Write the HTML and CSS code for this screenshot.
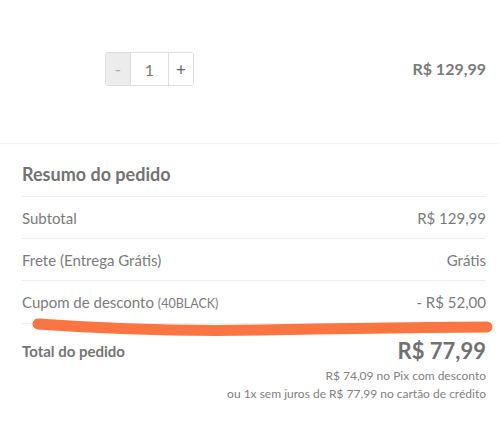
FILE: index.html
```html
<!DOCTYPE html>
<html lang="pt-BR">
<head>
<meta charset="utf-8">
<link rel="stylesheet" href="styles.css">
</head>
<body>
<div class="page">
  <div class="product">
    <div class="qty">
      <button class="qty-btn minus">-</button>
      <div class="qty-input">1</div>
      <button class="qty-btn plus">+</button>
    </div>
    <div class="product-price">R$ 129,99</div>
  </div>
  <div class="summary">
    <h2 class="summary-title">Resumo do pedido</h2>
    <div class="row"><span>Subtotal</span><span>R$ 129,99</span></div>
    <div class="row"><span>Frete (Entrega Grátis)</span><span>Grátis</span></div>
    <div class="row"><span>Cupom de desconto <small>(40BLACK)</small></span><span>- R$ 52,00</span></div>
    <div class="total">
      <span class="total-label">Total do pedido</span>
      <div class="total-values">
        <span class="total-price">R$ 77,99</span>
        <span class="note">R$ 74,09 no Pix com desconto</span>
        <span class="note">ou 1x sem juros de R$ 77,99 no cartão de crédito</span>
      </div>
    </div>
  </div>
  <svg class="scribble" width="500" height="427" viewBox="0 0 500 427">
    <path d="M38 324 Q 150 332 260 330 T 487 327" fill="none" stroke="#fa7542" stroke-width="11" stroke-linecap="round"/>
  </svg>
</div>
</body>
</html>
```

FILE: styles.css
```css
* { box-sizing: border-box; }
html, body { margin: 0; padding: 0; background: #fff; }
body {
  font-family: Lato, "Open Sans", sans-serif;
  color: #777;
  width: 500px;
  height: 427px;
  overflow: hidden;
}
.page { position: relative; width: 500px; height: 427px; }
.product {
  height: 144px;
  display: flex;
  justify-content: space-between;
  align-items: flex-start;
  padding: 52px 14px 0 105px;
  border-bottom: 1px solid #f1f1f1;
  box-shadow: 0 1px 2px rgba(0,0,0,0.02);
}
.qty {
  display: flex;
  height: 34px;
  border: 1px solid #ddd;
  border-radius: 3px;
  overflow: hidden;
}
.qty-btn {
  width: 25px;
  border: none;
  background: #fff;
  font-family: Lato, sans-serif;
  font-size: 17px;
  color: #666;
  padding: 0;
}
.qty-btn.minus { background: #ececec; color: #aaa; border-right: 1px solid #ddd; }
.qty-btn.plus { border-left: 1px solid #ddd; }
.qty-input {
  width: 37px;
  display: flex;
  align-items: center;
  justify-content: center;
  font-size: 16px;
  color: #777;
}
.product-price {
  font-weight: 700;
  font-size: 16px;
  line-height: 34px;
  color: #7a7a7a;
}
.summary { padding: 0 14px 0 22px; }
.summary-title {
  margin: 0;
  height: 53px;
  line-height: 60px;
  font-size: 18px;
  font-weight: 700;
  color: #727272;
  border-bottom: 1px solid #eee;
}
.row {
  height: 42px;
  display: flex;
  justify-content: space-between;
  align-items: center;
  font-size: 15px;
  color: #7b7b7b;
  border-bottom: 1px solid #eee;
}
.row:nth-of-type(3) { height: 43px; }
.row small { font-size: 12.5px; }
.total {
  display: flex;
  justify-content: space-between;
  align-items: flex-start;
  padding-top: 16px;
}
.total-label {
  font-size: 15px;
  font-weight: 700;
  color: #747474;
  line-height: 22px;
}
.total-values {
  display: flex;
  flex-direction: column;
  align-items: flex-end;
}
.total-price {
  font-size: 22px;
  font-weight: 700;
  color: #717171;
  line-height: 24px;
  margin-top: -1px;
}
.note {
  font-size: 12px;
  color: #808080;
  line-height: 18px;
}
.total-price + .note { margin-top: 4px; }
.scribble { position: absolute; left: 0; top: 0; pointer-events: none; }
```
